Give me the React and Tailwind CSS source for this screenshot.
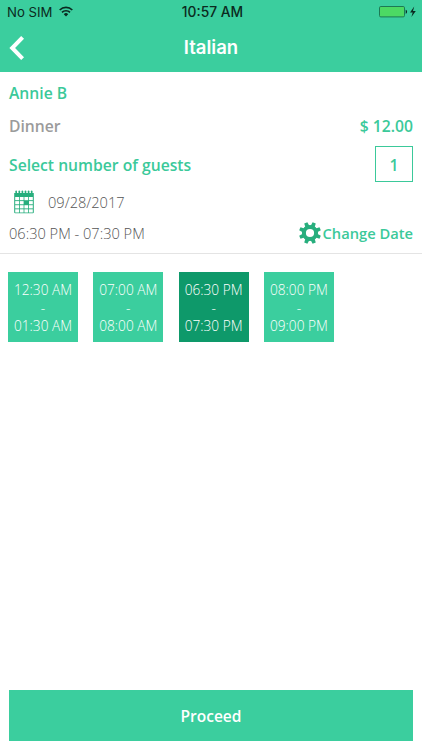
const slots = [
  { from: '12:30 AM', to: '01:30 AM' },
  { from: '07:00 AM', to: '08:00 AM' },
  { from: '06:30 PM', to: '07:30 PM', selected: true },
  { from: '08:00 PM', to: '09:00 PM' },
]

const teeth = [0, 45, 90, 135, 180, 225, 270, 315]

const WifiIcon = () => (
  <svg width="14" height="11" viewBox="0 0 14 11" fill="none" stroke="#0b2a20" strokeWidth="1.7">
    <path d="M0.7 4A9 9 0 0 1 13.3 4" />
    <path d="M3 6.4A5.7 5.7 0 0 1 11 6.4" />
    <path d="M7 10.4L4.8 8.2A3.1 3.1 0 0 1 9.2 8.2Z" fill="#0b2a20" stroke="none" />
  </svg>
)

const BatteryIcon = () => (
  <svg width="38" height="12" viewBox="0 0 38 12">
    <rect x="0.5" y="0.5" width="25" height="10.4" rx="1.3" fill="#4cd964" stroke="#1c7a55" />
    <path d="M26.7 3.8C28.5 4 28.5 7.6 26.7 7.8Z" fill="#0b2a20" />
    <path d="M35.2 0.6L31 6.4H33.7L32.4 11L36.8 4.9H34Z" fill="#0b2a20" />
  </svg>
)

const CalendarIcon = () => (
  <svg width="20" height="24" viewBox="0 0 20 24">
    <path d="M0.2 3H19.8V22.3Q19.8 23.3 18.8 23.3H1.2Q0.2 23.3 0.2 22.3Z" fill="#27ae7d" />
    {[2.2, 5.3, 8.4, 11.5, 14.6, 17.7].map((x) => (
      <path key={x} d={`M${x} 4.6V1.2`} stroke="#27ae7d" strokeWidth="1.6" strokeLinecap="round" />
    ))}
    {[7, 11.1, 15.2, 19.3].map((y, row) =>
      [1.2, 5.8, 10.4, 15].map((x, col) =>
        row === 1 && col === 2 ? null : (
          <rect key={`${x}-${y}`} x={x} y={y} width="3.8" height="3.2" fill="#fff" />
        )
      )
    )}
  </svg>
)

const GearIcon = () => (
  <svg width="22" height="22" viewBox="0 0 22 22">
    <g fill="#27ae7d">
      {teeth.map((deg) => (
        <path key={deg} d="M8.8 5L9.3 0H12.7L13.2 5Z" transform={`rotate(${deg + 22.5} 11 11)`} />
      ))}
    </g>
    <circle cx="11" cy="11" r="6.1" fill="#fff" stroke="#27ae7d" strokeWidth="4" />
  </svg>
)

const Header = () => (
  <header className="h-[72px] bg-[#3bce9e]">
    <div className="grid h-6 grid-cols-3 items-center font-['Inter','Liberation_Sans',sans-serif] text-[#0b2a20]">
      <div className="flex items-center gap-[7px] pl-[7px]">
        <span className="pt-px text-[13.2px] whitespace-nowrap">No SIM</span>
        <WifiIcon />
      </div>
      <span className="pl-[3px] text-center text-[13.8px] font-medium">10:57 AM</span>
      <div className="flex justify-end pr-[5px]">
        <BatteryIcon />
      </div>
    </div>
    <div className="grid h-12 grid-cols-3 items-center">
      <button className="pl-[9px]">
        <svg width="16" height="24" viewBox="0 0 16 24" fill="none" stroke="#fff" strokeWidth="4">
          <path d="M13.6 1.4L3.2 12L13.6 22.6" />
        </svg>
      </button>
      <h1 className="text-center font-['Inter','Liberation_Sans',sans-serif] text-[18.5px] font-semibold text-white">
        Italian
      </h1>
    </div>
  </header>
)

const App = () => {
  return (
    <div className="flex h-[750px] w-[422px] flex-col bg-white font-['Open_Sans','Noto_Sans',sans-serif]">
      <Header />

      {/* Booking summary */}
      <section className="h-[182px] border-b border-[#e4e4e4] px-[9px] pt-[9px] text-[15.7px] font-semibold text-[#3bc99a]">
        <div className="h-6 leading-[25px]">Annie B</div>
        <div className="mt-[9px] flex h-6 justify-between leading-[25px]">
          <span className="text-[#9b9b9b]">Dinner</span>
          <span>$ 12.00</span>
        </div>
        <div className="mt-2 flex h-9 items-center justify-between">
          <span className="pt-[3px]">Select number of guests</span>
          <span className="flex h-9 w-[38px] items-center justify-center border border-[#3bc99a] pt-[3px]">1</span>
        </div>
        <div className="mt-2 flex h-6 items-center gap-[14px] pl-[5px] text-[14.6px] font-light text-[#555]">
          <CalendarIcon />
          <span className="pt-0.5">09/28/2017</span>
        </div>
        <div className="mt-[7px] flex h-6 items-center justify-between">
          <span className="pt-px text-[14.6px] font-light text-[#555]">06:30 PM - 07:30 PM</span>
          <button className="flex items-center gap-[2px]">
            <GearIcon />
            <span className="text-[14.7px]">Change Date</span>
          </button>
        </div>
      </section>

      {/* Time slots */}
      <div className="flex gap-[15.3px] px-2 pt-[18px]">
        {slots.map((slot) => (
          <button
            key={slot.from}
            className={`flex h-[70px] w-[70px] flex-col items-center justify-center pt-[2px] text-[13.7px] leading-[18.2px] font-light whitespace-nowrap text-white ${
              slot.selected ? 'bg-[#0e996a]' : 'bg-[#3bce9e]'
            }`}
          >
            <span>{slot.from}</span>
            <span>-</span>
            <span>{slot.to}</span>
          </button>
        ))}
      </div>

      <button className="mx-[9px] mt-auto mb-[9px] h-[51px] bg-[#3bce9e] pt-[2px] text-[15.5px] font-semibold text-white">
        Proceed
      </button>
    </div>
  )
}

export default App
